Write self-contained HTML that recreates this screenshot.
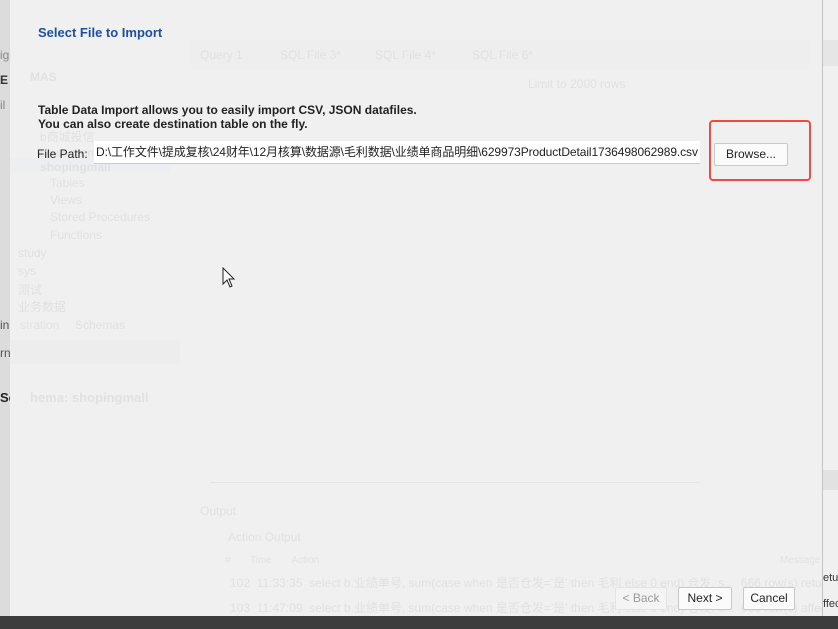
<!DOCTYPE html>
<html><head><meta charset="utf-8"><style>
*{margin:0;padding:0;box-sizing:border-box}
body{width:838px;height:629px;overflow:hidden;background:#e9e9e9;font-family:"Liberation Sans","Noto Sans CJK SC",sans-serif;position:relative}
.abs{position:absolute}
.ghost{position:absolute;color:#e1e1e1;font-size:12px;white-space:nowrap}
.dlg{position:absolute;left:10px;top:0;width:812px;height:616px;background:#f0f0f0;overflow:hidden}
.btn{position:absolute;height:23px;border:1px solid #c8c8c8;background:#fbfbfb;border-radius:2px;font-size:12px;color:#222;text-align:center;line-height:21px}
</style></head><body>
<div class="abs" style="left:0;top:0;width:10px;height:616px;background:#dcdcdc"></div>
<div class="abs" style="left:0;top:48px;font-size:12px;color:#888">ig</div>
<div class="abs" style="left:0;top:73px;font-size:12px;font-weight:bold;color:#333">E</div>
<div class="abs" style="left:0;top:98px;font-size:12px;color:#888">il</div>
<div class="abs" style="left:0;top:318px;font-size:12px;color:#555">in</div>
<div class="abs" style="left:0;top:346px;font-size:12px;color:#555">rn</div>
<div class="abs" style="left:0;top:390px;font-size:13px;font-weight:bold;color:#222">Sc</div>
<div class="abs" style="left:822px;top:0;width:16px;height:616px;background:#f0f0f0;border-left:1px solid #c4c4c4"></div>
<div class="abs" style="left:823px;top:40px;width:15px;height:26px;background:#e6e6e6"></div>
<div class="abs" style="left:823px;top:470px;width:15px;height:20px;background:#e2e2e2"></div>
<div class="abs" style="left:823px;top:572px;font-size:11px;color:#333">etur</div>
<div class="abs" style="left:823px;top:598px;font-size:11px;color:#333">ffec</div>
<div class="dlg">
 <div class="ghost" style="left:20px;top:70px;font-weight:bold">MAS</div>
 <div class="ghost" style="left:30px;top:128px">b商城投信</div>
 <div class="ghost" style="left:30px;top:146px">newschema</div>
 <div class="abs" style="left:0;top:158px;width:160px;height:14px;background:#eceef2"></div>
 <div class="ghost" style="left:30px;top:160px;font-weight:bold">shopingmall</div>
 <div class="ghost" style="left:40px;top:176px">Tables</div>
 <div class="ghost" style="left:40px;top:193px">Views</div>
 <div class="ghost" style="left:40px;top:210px">Stored Procedures</div>
 <div class="ghost" style="left:40px;top:228px">Functions</div>
 <div class="ghost" style="left:8px;top:246px">study</div>
 <div class="ghost" style="left:8px;top:264px">sys</div>
 <div class="ghost" style="left:8px;top:281px">测试</div>
 <div class="ghost" style="left:8px;top:298px">业务数据</div>
 <div class="ghost" style="left:10px;top:318px">stration</div>
 <div class="ghost" style="left:65px;top:318px">Schemas</div>
 <div class="abs" style="left:0;top:340px;width:170px;height:24px;background:#ededed"></div>
 <div class="ghost" style="left:20px;top:390px;font-size:13px;font-weight:bold">hema: shopingmall</div>
 <div class="abs" style="left:180px;top:40px;width:620px;height:30px;background:#eeeeee"></div>
 <div class="ghost" style="left:190px;top:48px">Query 1</div>
 <div class="ghost" style="left:270px;top:48px">SQL File 3*</div>
 <div class="ghost" style="left:365px;top:48px">SQL File 4*</div>
 <div class="ghost" style="left:462px;top:48px">SQL File 6*</div>
 <div class="ghost" style="left:518px;top:77px">Limit to 2000 rows</div>
 <div class="abs" style="left:200px;top:482px;width:490px;height:1px;background:#e4e4e4"></div>
 <div class="ghost" style="left:190px;top:504px">Output</div>
 <div class="ghost" style="left:218px;top:530px">Action Output</div>
 <div class="ghost" style="left:215px;top:555px;font-size:10px">#&nbsp;&nbsp;&nbsp;&nbsp;&nbsp;&nbsp;&nbsp;Time&nbsp;&nbsp;&nbsp;&nbsp;&nbsp;&nbsp;&nbsp;Action</div>
 <div class="ghost" style="left:770px;top:555px;font-size:10px">Message</div>
 <div class="ghost" style="left:220px;top:574px">102&nbsp; 11:33:35&nbsp; select b.业绩单号, sum(case when 是否仓发='是' then 毛利 else 0 end) 仓发, s...&nbsp; 666 row(s) retur</div>
 <div class="ghost" style="left:220px;top:599px">103&nbsp; 11:47:09&nbsp; select b.业绩单号, sum(case when 是否仓发='是' then 毛利 else 0 end) 仓发, s...&nbsp; 666 row(s) affec</div>

 <div class="abs" style="left:28px;top:25px;font-size:13px;font-weight:bold;color:#1f4fa3">Select File to Import</div>
 <div class="abs" style="left:28px;top:103px;font-size:12px;font-weight:bold;color:#222;line-height:14px">Table Data Import allows you to easily import CSV, JSON datafiles.<br>You can also create destination table on the fly.</div>
 <div class="abs" style="left:27px;top:147px;font-size:12px;color:#222">File Path:</div>
 <div class="abs" style="left:84px;top:141px;width:606px;height:23px;background:#fff;border-bottom:1px solid #ccc;font-size:12px;color:#222;line-height:22px;padding-left:2px;white-space:nowrap;overflow:hidden;letter-spacing:-0.1px">D:\工作文件\提成复核\24财年\12月核算\数据源\毛利数据\业绩单商品明细\629973ProductDetail1736498062989.csv</div>
 <div class="btn" style="left:704px;top:143px;width:74px">Browse...</div>
 <div class="abs" style="left:699px;top:120px;width:102px;height:61px;border:2px solid #ee4b43;border-radius:4px"></div>
 <svg class="abs" style="left:212px;top:267px" width="14" height="22" viewBox="0 0 14 22"><path d="M1 1 L1 17 L5 13 L8 20 L10 19 L7 12 L12 12 Z" fill="#fff" stroke="#222" stroke-width="1"/></svg>
 <div class="btn" style="left:605px;top:587px;width:52px;color:#9a9a9a;border-color:#e4e4e4;background:#f4f4f4">&lt; Back</div>
 <div class="btn" style="left:668px;top:587px;width:54px">Next &gt;</div>
 <div class="btn" style="left:733px;top:587px;width:52px">Cancel</div>
</div>
<div class="abs" style="left:0;top:616px;width:838px;height:13px;background:#3d3d3d"></div>
</body></html>
